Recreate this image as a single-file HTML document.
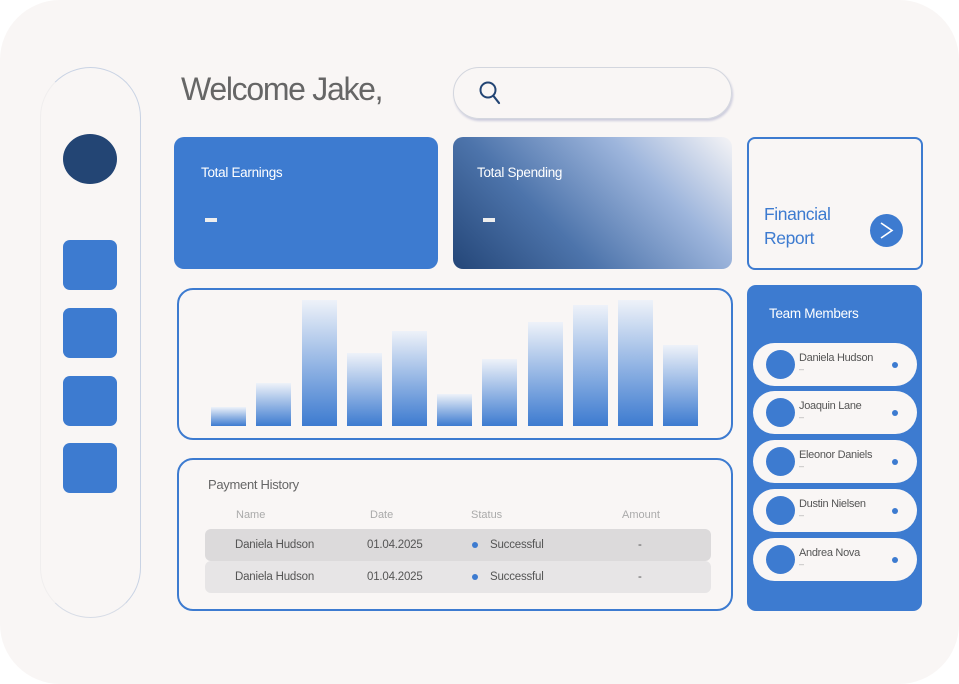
<!DOCTYPE html>
<html><head><style>
*{margin:0;padding:0;box-sizing:border-box}
body{width:959px;height:684px;background:#fff;font-family:"Liberation Sans",sans-serif;position:relative;overflow:hidden}
.bg{position:absolute;left:0;top:0;width:959px;height:684px;background:#f9f6f5;border-radius:60px}
.a{position:absolute}
.side{left:40px;top:67px;width:101px;height:551px;border-radius:52px;border:1.5px solid #c9d3e4;border-left-color:#f0eeee;border-bottom-color:#d7dce6}
.sq{left:63px;width:54px;height:50px;background:#3d7bd0;border-radius:7px}
.card{border-radius:10px}
.t{color:#fff;font-size:13.5px;letter-spacing:-0.3px}
.bar{position:absolute;bottom:0;width:35px;background:linear-gradient(to bottom,#eef2f9,#3d7bd0)}
.mem{left:753px;width:164px;height:43px;background:#f9f6f5;border-radius:22px}
.mem .av{position:absolute;left:13px;top:7px;width:29px;height:29px;border-radius:50%;background:#3d7bd0}
.mem .n{position:absolute;left:46px;top:9px;font-size:11px;color:#555;letter-spacing:-0.3px}
.mem .d{position:absolute;left:46px;top:21px;font-size:9px;color:#aaa}
.mem .dot{position:absolute;left:139px;top:19px;width:6px;height:6px;border-radius:50%;background:#3d7bd0}
.row{left:205px;width:506px;height:32px;border-radius:6px;font-size:11.5px;color:#555;letter-spacing:-0.2px}
.row span{position:absolute;top:10px}
</style></head><body>
<div class="bg"></div>
<div class="a side"></div>
<div class="a" style="left:63px;top:134px;width:54px;height:50px;border-radius:50%;background:#234574"></div>
<div class="a sq" style="top:240px"></div>
<div class="a sq" style="top:308px"></div>
<div class="a sq" style="top:376px"></div>
<div class="a sq" style="top:443px"></div>
<div class="a" style="left:181px;top:71px;font-size:32px;color:#666;letter-spacing:-1.3px">Welcome Jake,</div>
<div class="a" style="left:453px;top:67px;width:279px;height:52px;border-radius:26px;border:1.5px solid #d3d6de;box-shadow:1px 2px 2px #ccd"></div>
<svg class="a" style="left:478px;top:79px" width="26" height="28" viewBox="0 0 26 28"><circle cx="10" cy="11" r="7.5" fill="none" stroke="#234574" stroke-width="2"/><line x1="15.5" y1="17" x2="21" y2="24" stroke="#234574" stroke-width="2.2" stroke-linecap="round"/></svg>
<div class="a card" style="left:174px;top:137px;width:264px;height:132px;background:#3d7bd0"></div>
<div class="a t" style="left:201px;top:165px">Total Earnings</div>
<div class="a" style="left:205px;top:218px;width:12px;height:4px;background:#eee"></div>
<div class="a card" style="left:453px;top:137px;width:279px;height:132px;background:linear-gradient(225deg,#f5f4f6 0%,#9db5dc 30%,#4d74ab 65%,#244678 100%)"></div>
<div class="a t" style="left:477px;top:165px">Total Spending</div>
<div class="a" style="left:483px;top:218px;width:12px;height:4px;background:#eee"></div>
<div class="a" style="left:747px;top:137px;width:176px;height:133px;border:2px solid #3d7bd0;border-radius:8px"></div>
<div class="a" style="left:764px;top:202px;font-size:17.5px;color:#3d7bd0;line-height:24px;letter-spacing:-0.4px">Financial<br>Report</div>
<div class="a" style="left:870px;top:214px;width:33px;height:33px;border-radius:50%;background:#3d7bd0"></div>
<svg class="a" style="left:870px;top:214px" width="33" height="33"><path d="M11 9 L22 16.5 L11 24" fill="none" stroke="#fff" stroke-width="1.6"/></svg>
<div class="a" style="left:177px;top:288px;width:556px;height:152px;border:2px solid #3d7bd0;border-radius:16px"></div>
<div class="a" style="left:0;top:0;width:959px;height:426px">
<div class="bar" style="left:211px;height:19px"></div>
<div class="bar" style="left:256px;height:43px"></div>
<div class="bar" style="left:302px;height:126px"></div>
<div class="bar" style="left:347px;height:73px"></div>
<div class="bar" style="left:392px;height:95px"></div>
<div class="bar" style="left:437px;height:32px"></div>
<div class="bar" style="left:482px;height:67px"></div>
<div class="bar" style="left:528px;height:104px"></div>
<div class="bar" style="left:573px;height:121px"></div>
<div class="bar" style="left:618px;height:126px"></div>
<div class="bar" style="left:663px;height:81px"></div>
</div>
<div class="a" style="left:177px;top:458px;width:556px;height:153px;border:2px solid #3d7bd0;border-radius:16px"></div>
<div class="a" style="left:208px;top:477px;font-size:13px;color:#666;letter-spacing:-0.3px">Payment History</div>
<div class="a" style="left:236px;top:509px;font-size:11px;color:#aaa">Name</div>
<div class="a" style="left:370px;top:509px;font-size:11px;color:#aaa">Date</div>
<div class="a" style="left:471px;top:509px;font-size:11px;color:#aaa">Status</div>
<div class="a" style="left:622px;top:509px;font-size:11px;color:#aaa">Amount</div>
<div class="a row" style="top:529px;background:#dcdadb"><span style="left:30px">Daniela Hudson</span><span style="left:162px">01.04.2025</span><span style="left:267px;top:13px;width:6px;height:6px;border-radius:50%;background:#3d7bd0"></span><span style="left:285px">Successful</span><span style="left:433px">-</span></div>
<div class="a row" style="top:561px;background:#e7e5e6"><span style="left:30px">Daniela Hudson</span><span style="left:162px">01.04.2025</span><span style="left:267px;top:13px;width:6px;height:6px;border-radius:50%;background:#3d7bd0"></span><span style="left:285px">Successful</span><span style="left:433px">-</span></div>
<div class="a" style="left:747px;top:285px;width:175px;height:326px;background:#3d7bd0;border-radius:9px"></div>
<div class="a t" style="left:769px;top:306px;font-size:13.5px">Team Members</div>
<div class="a mem" style="top:343px"><div class="av"></div><div class="n">Daniela Hudson</div><div class="d">–</div><div class="dot"></div></div>
<div class="a mem" style="top:391px"><div class="av"></div><div class="n">Joaquin Lane</div><div class="d">–</div><div class="dot"></div></div>
<div class="a mem" style="top:440px"><div class="av"></div><div class="n">Eleonor Daniels</div><div class="d">–</div><div class="dot"></div></div>
<div class="a mem" style="top:489px"><div class="av"></div><div class="n">Dustin Nielsen</div><div class="d">–</div><div class="dot"></div></div>
<div class="a mem" style="top:538px"><div class="av"></div><div class="n">Andrea Nova</div><div class="d">–</div><div class="dot"></div></div>
</body></html>
